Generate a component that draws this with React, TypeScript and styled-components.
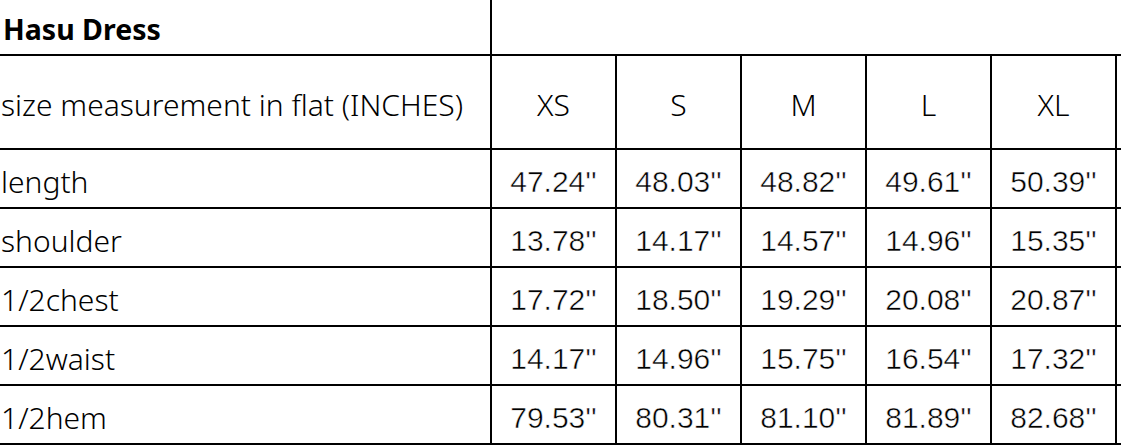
import React from "react";
import styled, { createGlobalStyle } from "styled-components";

const Global = createGlobalStyle`
  html, body { margin: 0; padding: 0; background: #fff; overflow: hidden; }
  body { width: 1121px; height: 445px; }
`;

const Grid = styled.div`
  display: grid;
  grid-template-columns: 490px repeat(5, 123px) 120px;
  grid-template-rows: 54px 92px repeat(5, 57px);
  gap: 2px;
  background: #000;
  padding: 2px;
  margin: -2px 0 0 -2px;
  width: max-content;
`;

const Cell = styled.div<{ $span?: number; $align?: "left" | "center"; $pad?: number }>`
  background: #fff;
  display: flex;
  align-items: center;
  justify-content: ${(p) => (p.$align === "left" ? "flex-start" : "center")};
  padding-left: ${(p) => (p.$align === "left" ? "1px" : "0")};
  padding-top: ${(p) => p.$pad ?? 0}px;
  box-sizing: border-box;
  grid-column: span ${(p) => p.$span ?? 1};
  color: #000;
  white-space: nowrap;
  overflow: hidden;
`;

const Title = styled.span`
  font-family: "Noto Sans", "Open Sans", sans-serif;
  font-weight: 700;
  font-size: 28.5px;
  padding-left: 2px;
`;

const Label = styled.span`
  font-family: "Noto Sans", "Open Sans", sans-serif;
  font-weight: 300;
  font-size: 30px;
`;

const Num = styled.span`
  font-family: "Liberation Sans", Arial, sans-serif;
  font-size: 30px;
  color: #000;
  -webkit-text-stroke: 0.5px #fff;
`;

const sizes = ["XS", "S", "M", "L", "XL"];
const rows: [string, string[]][] = [
  ["length", ["47.24''", "48.03''", "48.82''", "49.61''", "50.39''"]],
  ["shoulder", ["13.78''", "14.17''", "14.57''", "14.96''", "15.35''"]],
  ["1/2chest", ["17.72''", "18.50''", "19.29''", "20.08''", "20.87''"]],
  ["1/2waist", ["14.17''", "14.96''", "15.75''", "16.54''", "17.32''"]],
  ["1/2hem", ["79.53''", "80.31''", "81.10''", "81.89''", "82.68''"]],
];

export default function App() {
  return (
    <>
      <Global />
      <Grid>
        <Cell $align="left" $pad={4}>
          <Title>Hasu Dress</Title>
        </Cell>
        <Cell $span={6} />
        <Cell $align="left" $pad={5}>
          <Label>size measurement in flat (INCHES)</Label>
        </Cell>
        {sizes.map((s) => (
          <Cell key={s} $pad={5}>
            <Label>{s}</Label>
          </Cell>
        ))}
        <Cell />
        {rows.map(([name, vals]) => (
          <React.Fragment key={name}>
            <Cell $align="left" $pad={5}>
              <Label>{name}</Label>
            </Cell>
            {vals.map((v, i) => (
              <Cell key={i} $pad={7}>
                <Num>{v}</Num>
              </Cell>
            ))}
            <Cell />
          </React.Fragment>
        ))}
      </Grid>
    </>
  );
}
